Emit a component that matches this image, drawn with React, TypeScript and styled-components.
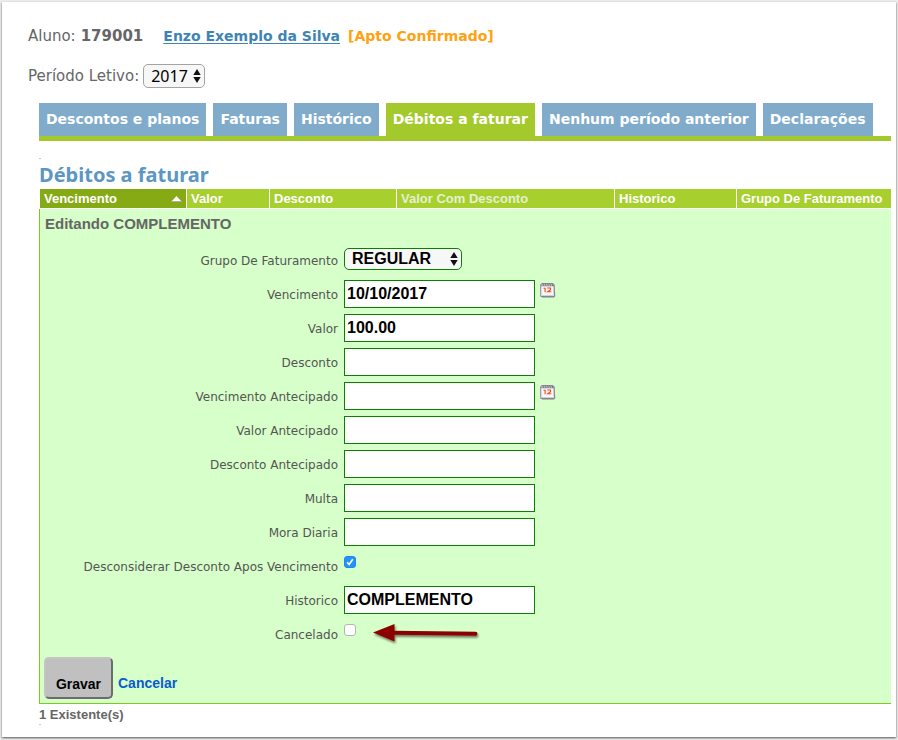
import React from "react";
import styled, { createGlobalStyle } from "styled-components";

const sans = `"DejaVu Sans", Verdana, sans-serif`;
const arial = `"Liberation Sans", Arial, sans-serif`;

const GlobalStyle = createGlobalStyle`
  *, *::before, *::after { box-sizing: border-box; }
  html, body { margin: 0; background: #ececec; }
  body { font-family: ${sans}; color: #666; }
`;

const Page = styled.main`
  margin: 2px 2px 3px 2px;
  padding: 20px 5px 12px 37px;
  min-height: calc(100vh - 5px);
  background: #fff;
  box-shadow: 0 1px 2px #555;
`;

const Student = styled.header`
  display: flex;
  align-items: center;
  margin-left: -11px;
  height: 28px;
  font-size: 15px;
  white-space: pre;
`;

const Code = styled.strong`
  margin: 0 20px 0 5px;
`;

const StudentLink = styled.a`
  margin-right: 8px;
  color: #3d84b5;
  font-size: 14px;
  font-weight: bold;
  text-underline-offset: 2px;
`;

const Status = styled.strong`
  color: #ffa210;
  font-size: 14px;
`;

const Period = styled.div`
  display: flex;
  align-items: center;
  gap: 4px;
  margin: 12px 0 14px -11px;
  height: 27px;
  font-size: 15px;
`;

const SelectFrame = styled.span<{ $wide?: boolean }>`
  display: inline-grid;
  align-items: center;
  width: ${(p) => (p.$wide ? 118 : 62)}px;
  height: ${(p) => (p.$wide ? 22 : 24)}px;
  & > * { grid-area: 1 / 1; }
  & > svg { justify-self: end; margin-right: 4px; pointer-events: none; }
`;

const Select = styled.select<{ $green?: boolean }>`
  appearance: none;
  width: 100%;
  height: 100%;
  margin: 0;
  padding: 0 7px;
  border: 1px solid ${(p) => (p.$green ? "#0b8000" : "#a3a3a3")};
  border-radius: 5px;
  background: #f7f7f7;
  color: #000;
  font: ${(p) => (p.$green ? `bold 16px ${arial}` : `16px "Noto Sans", sans-serif`)};
  line-height: 18px;
`;

const Tabs = styled.nav`
  display: flex;
  gap: 7px;
  border-bottom: 5px solid #a4c92d;
`;

const Tab = styled.a<{ $active?: boolean }>`
  height: 33px;
  padding: 0 7px;
  background: ${(p) => (p.$active ? "#a4c92d" : "#80abcb")};
  color: #fff;
  font-size: 14px;
  font-weight: bold;
  line-height: 32px;
  text-align: center;
  text-decoration: none;
  white-space: nowrap;
`;

const Speck = styled.div`
  width: 2px;
  height: 1px;
  background: #b9ccd3;
`;

const Title = styled.h1`
  margin: 3px 0 1px;
  height: 26px;
  color: #5b97c2;
  font: bold 20px "Noto Sans", sans-serif;
  line-height: 26px;
`;

const Section = styled.section`
  padding-top: 17px;
`;

const Table = styled.table`
  width: 100%;
  border-collapse: separate;
  border-spacing: 0;
  table-layout: fixed;
  font-family: ${arial};
`;

const Th = styled.th<{ $width?: number; $sorted?: boolean; $muted?: boolean }>`
  width: ${(p) => (p.$width ? `${p.$width}px` : "auto")};
  height: 20px;
  padding: 0 4px;
  border-left: 1px solid #fff;
  border-bottom: 1px solid #fff;
  background: ${(p) => (p.$sorted ? "#86aa14" : "#a7cf2e")};
  color: ${(p) => (p.$muted ? "#e6efd2" : "#fff")};
  font-size: 13px;
  line-height: 19px;
  text-align: left;
  white-space: nowrap;
`;

const ThContent = styled.span`
  display: flex;
  align-items: center;
  justify-content: space-between;
`;

const EditCell = styled.td`
  padding: 6px 4px 4px;
  border-left: 1px solid #7fc81e;
  border-bottom: 1px solid #7fc81e;
  background: #d7ffc9;
`;

const FormTitle = styled.h2`
  margin: 0 0 13px 1px;
  font-size: 15px;
  line-height: 18px;
`;

const Fields = styled.div`
  display: grid;
  gap: 6px;
`;

const Field = styled.div`
  display: grid;
  grid-template-columns: 294px 1fr;
  column-gap: 6px;
  height: 28px;
`;

const Label = styled.label`
  padding-top: 1px;
  color: #555;
  font: 12px ${sans};
  line-height: 28px;
  text-align: right;
  white-space: nowrap;
`;

const Control = styled.div`
  display: flex;
  align-items: flex-start;
  gap: 5px;
`;

const SelectControl = styled(Control)`
  padding-top: 2px;
`;

const CheckControl = styled(Control)`
  gap: 17px;
  padding-top: 4px;
`;

const TextInput = styled.input`
  width: 191px;
  height: 28px;
  padding: 0 2px;
  border: 1px solid #0b8000;
  border-radius: 0;
  background: #fff;
  color: #000;
  font: bold 16px ${arial};
`;

const CheckFrame = styled.span`
  display: grid;
  width: 12px;
  height: 12px;
  & > * { grid-area: 1 / 1; }
  & > svg { pointer-events: none; }
`;

const Check = styled.input`
  appearance: none;
  width: 12px;
  height: 12px;
  margin: 0;
  border: 1px solid #b5b5b5;
  border-radius: 3px;
  background: #fff;
  &:checked { border-color: #1f86f5; background: #2492fb; }
  & + svg { visibility: hidden; }
  &:checked + svg { visibility: visible; }
`;

const IconButton = styled.button`
  display: flex;
  margin-top: 2px;
  padding: 0;
  border: 0;
  background: none;
`;

const Actions = styled.div`
  display: flex;
  gap: 5px;
  margin-top: 9px;
`;

const Save = styled.button`
  width: 69px;
  height: 42px;
  padding: 11px 0 0;
  border: 2px solid;
  border-color: #c4c4c4 #6c6c6c #6c6c6c #c4c4c4;
  border-radius: 5px;
  background: #c0c0c0;
  color: #000;
  font: bold 14px ${arial};
`;

const Cancel = styled.a`
  padding-top: 17px;
  color: #0b5ad0;
  font-size: 14px;
  font-weight: bold;
  line-height: 18px;
  text-decoration: none;
`;

const Count = styled.p`
  margin: 3px 0 1px;
  font: bold 13px ${arial};
  line-height: 16px;
`;

const SelectArrows = () => (
  <svg width="8" height="14" viewBox="0 0 8 14" aria-hidden="true">
    <path d="M4 0 7.7 5.9H.3zM4 14 .3 8.1h7.4z" fill="#111" />
  </svg>
);

const SortArrow = () => (
  <svg width="11" height="6" viewBox="0 0 11 6" aria-hidden="true">
    <path d="M0 6 5.5 0 11 6z" fill="#fff" />
    <path d="M0 5.5h11" stroke="#b8a5ad" />
  </svg>
);

const CalendarIcon = () => (
  <svg width="16" height="17" viewBox="0 0 16 17" aria-hidden="true">
    <path d="M2.5 2.5h11.8l1 11.5-1.3 1.6H2z" fill="#7d8474" />
    <path d="M.7 2.7 1.8 1.5h11l1.2 1.3.3 11.7H.8z" fill="#f7f6fa" stroke="#858394" />
    <path d="M1.8 1.2h11.4l.5 3.1H1.2z" fill="#74747c" />
    <path d="M2.2 4.5 3 1.6m1 2.9.8-2.9m1 2.9.8-2.9m1 2.9.8-2.9m1 2.9.8-2.9m1 2.9.8-2.9" stroke="#d7d7df" strokeWidth=".7" />
    <path d="M3.5 6.2h1.6v4M7.2 6h3.3v1.6L7.7 9.7h3.6" fill="none" stroke="#f04b16" strokeWidth="1.1" />
    <path d="M2 13.5h11" stroke="#d1cfdf" />
  </svg>
);

const CheckMark = () => (
  <svg width="12" height="12" viewBox="0 0 12 12" aria-hidden="true">
    <path d="m3.1 6.3 2 2.2 3.7-5.2" fill="none" stroke="#fff" strokeWidth="1.6" />
  </svg>
);

const PointerArrow = () => (
  <svg width="112" height="26" viewBox="0 0 112 26" aria-hidden="true">
    <defs>
      <filter id="pointer-shadow" x="-10%" y="-30%" width="120%" height="180%">
        <feDropShadow dx="1" dy="2" stdDeviation="1" floodOpacity=".5" />
      </filter>
    </defs>
    <g filter="url(#pointer-shadow)" fill="#8b0000">
      <path d="M0 8.5 21.5 0v17.5z" />
      <path d="m20 6.8 82.5 1a2 2 0 0 1 0 4L20 10.8z" />
    </g>
  </svg>
);

const tabs = ["Descontos e planos", "Faturas", "Histórico", "Débitos a faturar", "Nenhum período anterior", "Declarações"];

type FieldData = { id: string; label: string; value?: string; date?: boolean };

const fields: FieldData[] = [
  { id: "vencimento", label: "Vencimento", value: "10/10/2017", date: true },
  { id: "valor", label: "Valor", value: "100.00" },
  { id: "desconto", label: "Desconto" },
  { id: "vencimento-antecipado", label: "Vencimento Antecipado", date: true },
  { id: "valor-antecipado", label: "Valor Antecipado" },
  { id: "desconto-antecipado", label: "Desconto Antecipado" },
  { id: "multa", label: "Multa" },
  { id: "mora", label: "Mora Diaria" },
];

const TextField = ({ id, label, value = "", date }: FieldData) => (
  <Field>
    <Label htmlFor={id}>{label}</Label>
    <Control>
      <TextInput id={id} type="text" defaultValue={value} />
      {date && <IconButton type="button" aria-label={`Calendário: ${label}`}><CalendarIcon /></IconButton>}
    </Control>
  </Field>
);

const CheckField = ({ id, label, checked, children }: { id: string; label: string; checked?: boolean; children?: React.ReactNode }) => (
  <Field>
    <Label htmlFor={id}>{label}</Label>
    <CheckControl>
      <CheckFrame>
        <Check id={id} type="checkbox" defaultChecked={checked} />
        <CheckMark />
      </CheckFrame>
      {children}
    </CheckControl>
  </Field>
);

export default function App() {
  return (
    <>
      <GlobalStyle />
      <Page>
        <Student>
          <span>Aluno:</span>
          <Code>179001</Code>
          <StudentLink href="#aluno">Enzo Exemplo da Silva</StudentLink>
          <Status>[Apto Confirmado]</Status>
        </Student>
        <Period>
          <label htmlFor="periodo">Período Letivo:</label>
          <SelectFrame>
            <Select id="periodo"><option>2017</option></Select>
            <SelectArrows />
          </SelectFrame>
        </Period>
        <Tabs>
          {tabs.map((name) => (
            <Tab key={name} href="#" $active={name === "Débitos a faturar"}>{name}</Tab>
          ))}
        </Tabs>
        <Section>
          <Speck />
          <Title>Débitos a faturar</Title>
          <Table>
            <thead>
              <tr>
                <Th $width={147} $sorted><ThContent>Vencimento<SortArrow /></ThContent></Th>
                <Th $width={83}>Valor</Th>
                <Th $width={127}>Desconto</Th>
                <Th $width={218} $muted>Valor Com Desconto</Th>
                <Th $width={122}>Historico</Th>
                <Th>Grupo De Faturamento</Th>
              </tr>
            </thead>
            <tbody>
              <tr>
                <EditCell colSpan={6}>
                  <form onSubmit={(e) => e.preventDefault()}>
                    <FormTitle>Editando COMPLEMENTO</FormTitle>
                    <Fields>
                      <Field>
                        <Label htmlFor="grupo">Grupo De Faturamento</Label>
                        <SelectControl>
                          <SelectFrame $wide>
                            <Select id="grupo" $green><option>REGULAR</option></Select>
                            <SelectArrows />
                          </SelectFrame>
                        </SelectControl>
                      </Field>
                      {fields.map((f) => <TextField key={f.id} {...f} />)}
                      <CheckField id="desconsiderar" label="Desconsiderar Desconto Apos Vencimento" checked />
                      <TextField id="historico" label="Historico" value="COMPLEMENTO" />
                      <CheckField id="cancelado" label="Cancelado"><PointerArrow /></CheckField>
                    </Fields>
                    <Actions>
                      <Save type="submit">Gravar</Save>
                      <Cancel href="#cancelar">Cancelar</Cancel>
                    </Actions>
                  </form>
                </EditCell>
              </tr>
            </tbody>
          </Table>
          <Count>1 Existente(s)</Count>
          <Speck />
        </Section>
      </Page>
    </>
  );
}
